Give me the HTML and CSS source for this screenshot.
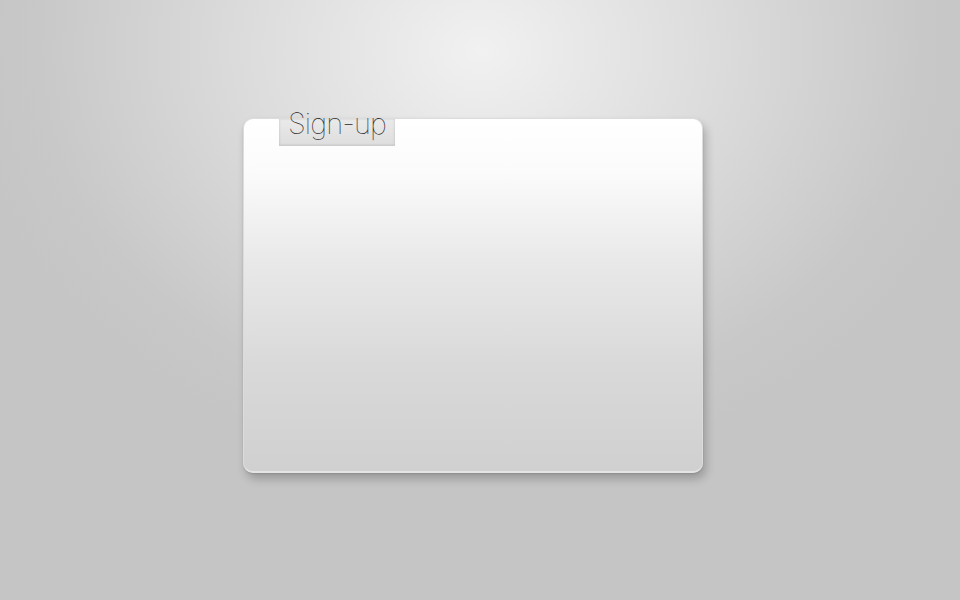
FILE: index.html
```html
<!DOCTYPE html>
<html>
<head>
<meta charset="utf-8">
<link rel="stylesheet" href="styles.css">
</head>
<body>
<div class="stage">
  <div class="card">
    <div class="tab"><span class="tab-label">Sign-up</span></div>
  </div>
</div>
</body>
</html>
```
FILE: styles.css
```css
html, body {
  margin: 0;
  height: 100%;
}
body {
  background: radial-gradient(ellipse 520px 420px at 480px 50px, #f1f1f1 0%, #dcdcdc 45%, #c8c8c8 85%, #c5c5c5 100%);
  background-color: #c5c5c5;
  font-family: Inter, "Open Sans", sans-serif;
}
.stage {
  padding: 118px 0 0 243px;
}
.card {
  width: 460px;
  height: 355px;
  box-sizing: border-box;
  border-radius: 10px;
  background: linear-gradient(to bottom, #ffffff 0%, #fbfbfb 15%, #e9e9e9 40%, #d9d9d9 70%, #d0d0d0 100%);
  border: 1px solid #dcdcdc;
  border-bottom: 2px solid #e4e4e4;
  box-shadow: 3px 6px 10px rgba(0,0,0,0.22), 0 1px 2px rgba(0,0,0,0.12);
}
.tab {
  display: flow-root;
  margin-left: 35px;
  width: 116px;
  height: 26px;
  background: linear-gradient(to bottom, #eaeaea, #dedede);
  border-bottom: 1px solid #cdcdcd;
  box-shadow: inset -1px 0 2px rgba(0,0,0,0.08), inset 1px 0 2px rgba(0,0,0,0.08);
}
.tab-label {
  display: block;
  white-space: nowrap;
  font-weight: 100;
  font-size: 29px;
  line-height: 30px;
  margin-top: -10px;
  padding-left: 9px;
  color: #2a2a2a;
  letter-spacing: -0.9px;
}
```
